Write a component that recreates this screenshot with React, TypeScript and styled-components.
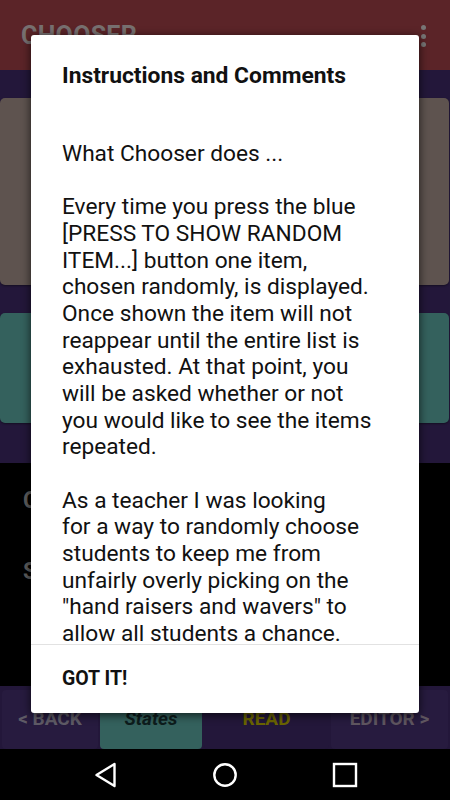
import { FC } from "react";
import styled, { createGlobalStyle } from "styled-components";

const GlobalStyle = createGlobalStyle`
  html, body {
    margin: 0;
    padding: 0;
    background: #000;
  }
  body {
    font-family: Roboto, "Liberation Sans", sans-serif;
  }
`;

const Screen = styled.div`
  width: 450px;
  height: 800px;
  display: flex;
  flex-direction: column;
  overflow: hidden;
  position: relative;
`;

const AppBar = styled.div`
  height: 70px;
  flex: none;
  background: #5b2428;
  display: flex;
  align-items: flex-start;
  justify-content: space-between;
  padding: 21px 24px 0 21px;
  box-sizing: border-box;
`;

const AppTitle = styled.div`
  color: #777070;
  font-size: 25px;
  font-weight: 700;
  letter-spacing: 0.3px;
`;

const Dots = styled.div`
  display: flex;
  flex-direction: column;
  gap: 3.5px;
  padding-top: 4px;
`;

const Dot = styled.span`
  width: 5px;
  height: 5px;
  border-radius: 50%;
  background: #787676;
`;

const Content = styled.div`
  height: 393px;
  flex: none;
  background: #23173a;
  display: flex;
  flex-direction: column;
  gap: 28px;
  padding: 28px 1px 0 0;
  box-sizing: border-box;
`;

const Card = styled.div<{ $tone: string; $h: number }>`
  height: ${(p) => p.$h}px;
  background: ${(p) => p.$tone};
  border-radius: 5px;
  box-shadow: 0 1px 2px rgba(0, 0, 0, 0.4);
`;

const Lower = styled.div`
  flex: 1;
  background: #000;
  padding: 24px 23px 0;
  display: flex;
  flex-direction: column;
  gap: 44px;
`;

const LowerText = styled.div`
  color: #5c5c5c;
  font-size: 23px;
  font-weight: 700;
`;

const TabBar = styled.div`
  height: 63px;
  flex: none;
  background: #23173a;
  display: grid;
  grid-template-columns: 96px 102px 125px 117px;
  column-gap: 2px;
  padding: 4px 2px 0 2px;
  box-sizing: border-box;
`;

const Tab = styled.div<{ $bg: string; $color: string; $italic?: boolean }>`
  background: ${(p) => p.$bg};
  color: ${(p) => p.$color};
  border-radius: 4px;
  display: flex;
  align-items: center;
  justify-content: center;
  font-size: 19px;
  font-weight: 700;
  font-style: ${(p) => (p.$italic ? "italic" : "normal")};
  padding-bottom: 2px;
`;

const NavBar = styled.div`
  height: 51px;
  flex: none;
  background: #000;
  display: flex;
  align-items: center;
  justify-content: space-between;
  padding: 0 92px 0 94px;
  box-sizing: border-box;
`;

const Dialog = styled.div`
  position: absolute;
  left: 31px;
  top: 35px;
  width: 388px;
  height: 678px;
  background: #fff;
  border-radius: 3px;
  box-shadow: 0 2px 10px rgba(0, 0, 0, 0.7);
  display: flex;
  flex-direction: column;
  overflow: hidden;
`;

const DialogTitle = styled.div`
  padding: 27px 31px 0;
  font-size: 22.8px;
  line-height: 28px;
  font-weight: 700;
  color: #111;
  flex: none;
`;

const DialogBody = styled.div`
  flex: 1;
  overflow: hidden;
  padding: 51px 31px 0;
  font-size: 22.7px;
  line-height: 26.67px;
  color: #111;
  white-space: pre;
`;

const DialogFooter = styled.div`
  height: 69px;
  flex: none;
  border-top: 1px solid #e2e2e2;
  display: flex;
  align-items: center;
  padding: 0 31px 2px;
  box-sizing: border-box;
`;

const DialogButton = styled.div`
  font-size: 19.5px;
  font-weight: 700;
  color: #111;
`;

const bodyText = `What Chooser does ...

Every time you press the blue
[PRESS TO SHOW RANDOM
ITEM...] button one item,
chosen randomly, is displayed.
Once shown the item will not
reappear until the entire list is
exhausted. At that point, you
will be asked whether or not
you would like to see the items
repeated.

As a teacher I was looking
for a way to randomly choose
students to keep me from
unfairly overly picking on the
"hand raisers and wavers" to
allow all students a chance.`;

const App: FC = () => {
  return (
    <>
      <GlobalStyle />
      <Screen>
        <AppBar>
          <AppTitle>CHOOSER</AppTitle>
          <Dots>
            <Dot />
            <Dot />
            <Dot />
          </Dots>
        </AppBar>
        <Content>
          <Card $tone="#5e534f" $h={187} />
          <Card $tone="#34615d" $h={110} />
        </Content>
        <Lower>
          <LowerText>Chooser</LowerText>
          <LowerText>States</LowerText>
        </Lower>
        <TabBar>
          <Tab $bg="#271b3f" $color="#5f5b66">
            &lt; BACK
          </Tab>
          <Tab $bg="#34615d" $color="#0d1c1c" $italic>
            States
          </Tab>
          <Tab $bg="#23173a" $color="#6a6400">
            READ
          </Tab>
          <Tab $bg="#271b3f" $color="#5f5660">
            EDITOR &gt;
          </Tab>
        </TabBar>
        <NavBar>
          <svg width="24" height="26" viewBox="0 0 24 26">
            <path d="M20.5 2 L2.5 13 L20.5 24 Z" fill="none" stroke="#fff" strokeWidth="2.4" strokeLinejoin="round" />
          </svg>
          <svg width="26" height="26" viewBox="0 0 26 26">
            <circle cx="13" cy="13" r="10.7" fill="none" stroke="#fff" strokeWidth="2.4" />
          </svg>
          <svg width="26" height="26" viewBox="0 0 26 26">
            <rect x="2" y="2" width="22" height="22" fill="none" stroke="#fff" strokeWidth="2.4" />
          </svg>
        </NavBar>
        <Dialog>
          <DialogTitle>Instructions and Comments</DialogTitle>
          <DialogBody>{bodyText}</DialogBody>
          <DialogFooter>
            <DialogButton>GOT IT!</DialogButton>
          </DialogFooter>
        </Dialog>
      </Screen>
    </>
  );
};

export default App;
